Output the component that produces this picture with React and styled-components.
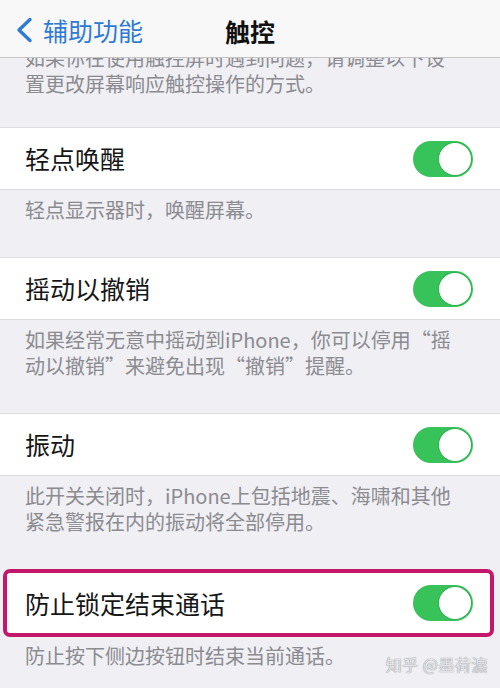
import React from "react";
import styled, { createGlobalStyle } from "styled-components";

const Global = createGlobalStyle`
  html, body { margin: 0; padding: 0; background: #efeff4; }
  body { font-family: "Noto Sans CJK SC", "Noto Sans", sans-serif; }
  * { box-sizing: border-box; }
`;

const Page = styled.div`
  position: relative;
  width: 500px;
  height: 688px;
  overflow: hidden;
  background: #efeff4;
`;

const NavBar = styled.header`
  position: relative;
  z-index: 1;
  height: 58px;
  background: #f8f8f8;
  border-bottom: 1px solid #c4c4c6;
  display: flex;
  align-items: center;
  padding-top: 3px;
`;

const Back = styled.div`
  display: flex;
  align-items: center;
  gap: 10px;
  padding-left: 15px;
  color: #2f7bd3;
  font-size: 25px;
  line-height: 1;
`;

const Title = styled.div`
  position: absolute;
  left: 0;
  right: 0;
  top: 0;
  height: 58px;
  display: flex;
  align-items: center;
  justify-content: center;
  padding-top: 3px;
  font-size: 25px;
  font-weight: 700;
  color: #111;
  pointer-events: none;
`;

const IntroClip = styled.div`
  height: 69px;
  overflow: hidden;
  padding: 0 25px;
`;

const IntroLine = styled.div`
  font-size: 20px;
  color: #8b8b90;
  white-space: nowrap;
  line-height: ${(p) => (p.$cut ? "0" : "26px")};
  height: ${(p) => (p.$cut ? "0" : "26px")};
  margin-top: ${(p) => (p.$cut ? "0" : "13px")};
`;

const Note = styled.p`
  margin: 0;
  padding: ${(p) => p.$pt ?? 7}px 25px 34px;
  font-size: 20px;
  line-height: 26px;
  color: #8b8b90;
  white-space: pre-line;
`;

const Row = styled.div`
  height: 63px;
  background: #fff;
  border-top: 1px solid #dcdce0;
  border-bottom: 1px solid #dcdce0;
  display: flex;
  align-items: center;
  justify-content: space-between;
  padding: 0 27px 0 25px;
`;

const HighlightRow = styled.div`
  height: 68px;
  margin: 0 6px 0 3px;
  background: #fff;
  border: 4px solid #c3186a;
  border-radius: 7px;
  display: flex;
  align-items: center;
  justify-content: space-between;
  padding: 0 17px 0 18px;
`;

const Label = styled.span`
  font-size: 25px;
  color: #161616;
  line-height: 1;
`;

const Track = styled.div`
  width: 60px;
  height: 36px;
  border-radius: 18px;
  background: #37c25a;
  display: flex;
  align-items: center;
  justify-content: flex-end;
  padding: 2px;
`;

const Knob = styled.div`
  width: 32px;
  height: 32px;
  border-radius: 50%;
  background: #fff;
  box-shadow: 0 0 0 1px rgba(40, 150, 70, 0.35);
`;

const Watermark = styled.div`
  position: absolute;
  right: 12px;
  bottom: 12px;
  font-size: 16px;
  color: #e4e4e8;
  text-shadow: 0 0 1px #9a9aa0, 0 0 1px #9a9aa0;
  letter-spacing: 0.5px;
`;

const Toggle = () => (
  <Track>
    <Knob />
  </Track>
);

const Chevron = () => (
  <svg width="18" height="26" viewBox="0 0 18 26" fill="none">
    <path
      d="M15 2.5 L4 13 L15 23.5"
      stroke="#2f7bd3"
      strokeWidth="3.4"
      strokeLinecap="round"
      strokeLinejoin="round"
    />
  </svg>
);

export default function App() {
  return (
    <Page>
      <Global />
      <NavBar>
        <Back>
          <Chevron />
          <span>辅助功能</span>
        </Back>
        <Title>触控</Title>
      </NavBar>
      <IntroClip>
        <IntroLine $cut>如果你在使用触控屏时遇到问题，请调整以下设</IntroLine>
        <IntroLine>置更改屏幕响应触控操作的方式。</IntroLine>
      </IntroClip>

      <Row>
        <Label>轻点唤醒</Label>
        <Toggle />
      </Row>
      <Note>轻点显示器时，唤醒屏幕。</Note>

      <Row>
        <Label>摇动以撤销</Label>
        <Toggle />
      </Row>
      <Note>{"如果经常无意中摇动到iPhone，你可以停用“摇\n动以撤销”来避免出现“撤销”提醒。"}</Note>

      <Row>
        <Label>振动</Label>
        <Toggle />
      </Row>
      <Note>{"此开关关闭时，iPhone上包括地震、海啸和其他\n紧急警报在内的振动将全部停用。"}</Note>

      <HighlightRow>
        <Label>防止锁定结束通话</Label>
        <Toggle />
      </HighlightRow>
      <Note $pt={6}>防止按下侧边按钮时结束当前通话。</Note>

      <Watermark>知乎 @墨荷瀌</Watermark>
    </Page>
  );
}
